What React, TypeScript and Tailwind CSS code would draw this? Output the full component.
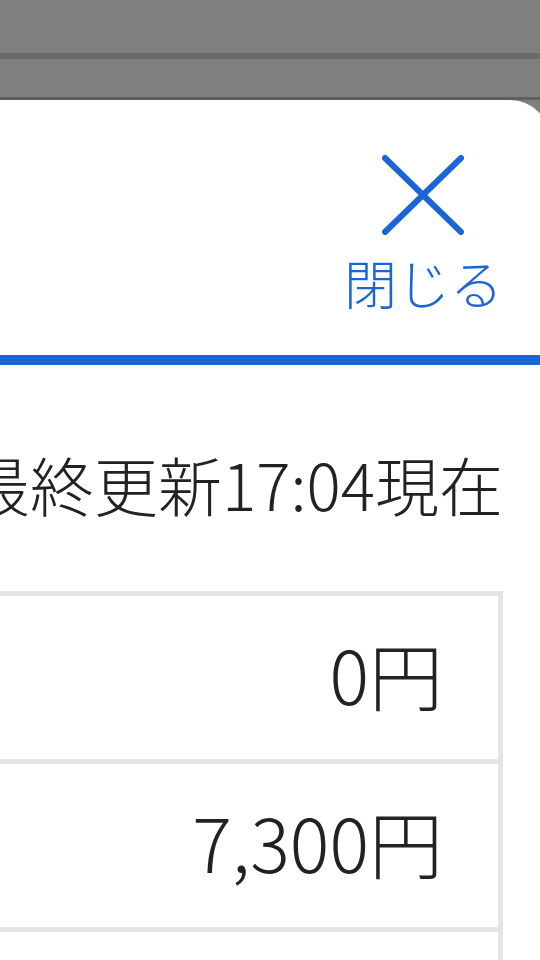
import React from "react";

const rows = ["0円", "7,300円", ""];

export default function App() {
  return (
    <div
      className="relative h-[960px] w-[540px] overflow-hidden bg-[#7f7f7f]"
      style={{ fontFamily: '"Noto Sans CJK JP", "Noto Sans", sans-serif' }}
    >
      {/* backdrop strip */}
      <div className="h-[53px]" />
      <div className="h-[6px] bg-[#6b6b6b]" />
      <div className="h-[38px]" />
      <div className="h-[3px] bg-[#5f5f5f]" />

      {/* sheet */}
      <div className="ml-[-210px] h-[900px] w-[760px] rounded-tr-[40px] bg-white">
        {/* header */}
        <div className="flex h-[255px] justify-end pr-[47px] pt-[55px]">
          <button type="button" className="flex flex-col items-center text-[#1b66d6]">
            <svg width="82" height="80" viewBox="0 0 82 80" className="mr-[2px]">
              <path
                d="M3 3 L79 77 M79 3 L3 77"
                stroke="#1b66d6"
                strokeWidth="6"
                strokeLinecap="round"
                fill="none"
              />
            </svg>
            <span className="mt-[17px] text-[53px] font-light leading-[60px]">閉じる</span>
          </button>
        </div>
        <div className="h-[10px] bg-[#1b66d6]" />

        {/* body */}
        <div className="pr-[47px] pt-[78px] text-right text-[64px] font-light leading-[80px] text-[#222]">
          最終更新17:04現在
        </div>
        <div className="mr-[47px] mt-[68px] border-[5px] border-b-0 border-[#e5e5e5]">
          {rows.map((r, i) => (
            <div
              key={i}
              className="flex h-[168px] items-center justify-end border-b-[5px] border-[#e5e5e5] pb-[10px] pr-[55px] text-[74px] font-light text-[#222]"
            >
              {r}
            </div>
          ))}
        </div>
      </div>
    </div>
  );
}
